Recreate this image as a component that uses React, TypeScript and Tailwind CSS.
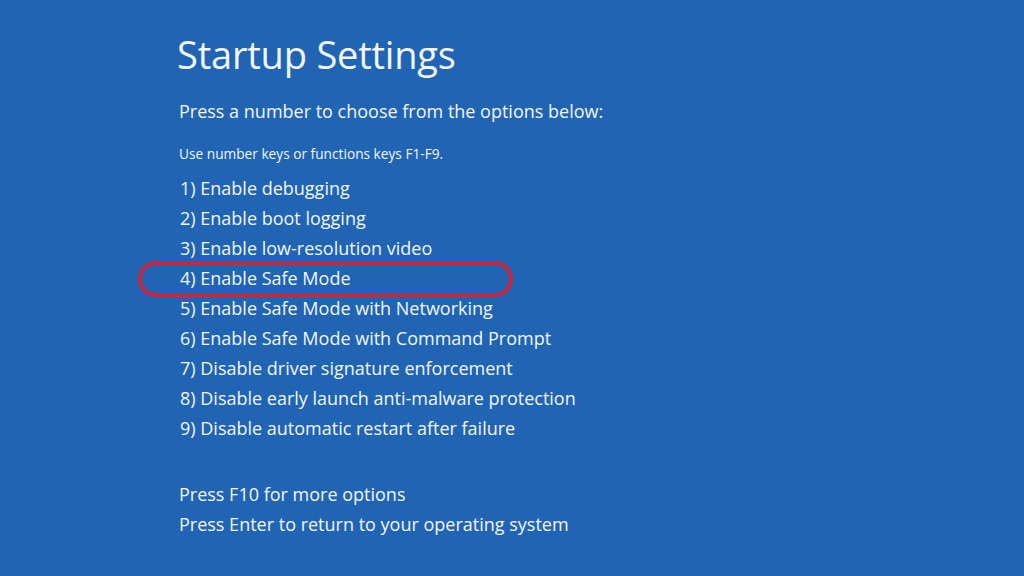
import React from 'react';

const OPTIONS = [
  '1) Enable debugging',
  '2) Enable boot logging',
  '3) Enable low-resolution video',
  '4) Enable Safe Mode',
  '5) Enable Safe Mode with Networking',
  '6) Enable Safe Mode with Command Prompt',
  '7) Disable driver signature enforcement',
  '8) Disable early launch anti-malware protection',
  '9) Disable automatic restart after failure',
];

export default function App() {
  return (
    <div
      className="w-[1024px] h-[576px] bg-[#2064b3] text-[#f2f6fb] overflow-hidden"
      style={{ fontFamily: '"Open Sans", "Noto Sans", sans-serif' }}
    >
      <div className="pl-[177px] pt-[30px] flex flex-col">
        <h1 className="text-[38px] leading-[48px] font-normal tracking-[-0.2px]">Startup Settings</h1>
        <p className="mt-[20px] pl-[2px] text-[18px] leading-[26px]">Press a number to choose from the options below:</p>
        <p className="mt-[20px] pl-[2px] text-[13.7px] leading-[20px]">Use number keys or functions keys F1-F9.</p>
        <ul className="mt-[9px] pl-[3px] flex flex-col">
          {OPTIONS.map((o, i) => (
            <li key={o} className="relative text-[18px] leading-[30px]">
              {o}
              {i === 3 && (
                <span className="absolute left-[-42px] top-[-2px] w-[375px] h-[36px] rounded-[18px] border-[4px] border-[#c6283f] pointer-events-none" />
              )}
            </li>
          ))}
        </ul>
        <div className="mt-[36px] pl-[2px] flex flex-col text-[18px] leading-[30px]">
          <span>Press F10 for more options</span>
          <span>Press Enter to return to your operating system</span>
        </div>
      </div>
    </div>
  );
}
